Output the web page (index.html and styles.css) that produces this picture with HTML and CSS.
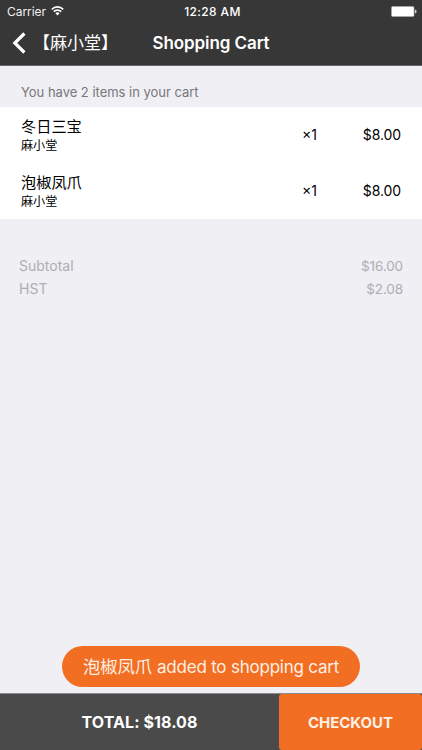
FILE: index.html
```html
<!DOCTYPE html>
<html lang="en">
<head>
<meta charset="utf-8">
<title>Shopping Cart</title>
<link rel="stylesheet" href="styles.css">
</head>
<body>
<div class="screen">
  <header class="top">
    <div class="status">
      <div class="carrier"><span>Carrier</span>
        <svg width="13" height="10" viewBox="0 0 13 10" fill="none" stroke="#fff" stroke-width="1.7"><path d="M.8 3.3a8.1 8.1 0 0 1 11.4 0M2.8 5.6a5.2 5.2 0 0 1 7.4 0"/><path d="M4.4 7.3a3 3 0 0 1 4.2 0l-2.1 2.2z" fill="#fff" stroke="none"/></svg>
      </div>
      <div class="time">12:28 AM</div>
      <div class="power"><svg width="27" height="11" viewBox="0 0 27 11"><rect x="1.5" y=".5" width="22.5" height="10" rx="1.2" fill="#fff" stroke="#aaa" stroke-width=".6"/><path d="M24.8 3.8h.8q.8 0 .8.8v1.8q0 .8-.8.8h-.8z" fill="#ccc"/></svg></div>
    </div>
    <nav class="nav">
      <a class="back"><svg width="14" height="22" viewBox="0 0 14 22" fill="none" stroke="#fff" stroke-width="3.2"><path d="M12.4 1.5 2.8 11l9.6 9.5"/></svg><span>【麻小堂】</span></a>
      <h1>Shopping Cart</h1>
    </nav>
  </header>
  <main class="content">
    <p class="count">You have 2 items in your cart</p>
    <ul class="items">
      <li><div class="name"><b>冬日三宝</b><small>麻小堂</small></div><span class="qty">×1</span><span class="price">$8.00</span></li>
      <li><div class="name"><b>泡椒凤爪</b><small>麻小堂</small></div><span class="qty">×1</span><span class="price">$8.00</span></li>
    </ul>
    <dl class="sums">
      <div><dt>Subtotal</dt><dd>$16.00</dd></div>
      <div><dt>HST</dt><dd>$2.08</dd></div>
    </dl>
  </main>
  <div class="toast"><span class="dish">泡椒凤爪</span><span>added to shopping cart</span></div>
  <footer class="bar"><div class="total">TOTAL: $18.08</div><button class="checkout">CHECKOUT</button></footer>
</div>
</body>
</html>
```
FILE: styles.css
```css
* { box-sizing: border-box; margin: 0; padding: 0; }
body { font-family: Inter, "Noto Sans CJK SC", sans-serif; color: #000; }
.screen { position: relative; width: 422px; height: 750px; background: #efeff4; display: flex; flex-direction: column; overflow: hidden; }
.top { height: 66px; background: #373737; border-bottom: 1px solid #68686b; color: #fff; flex: none; }
.status { height: 22px; display: grid; grid-template-columns: 1fr auto 1fr; align-items: center; padding: 0 5px 0 7px; font-size: 12px; }
.carrier { display: flex; gap: 5px; align-items: center; letter-spacing: -.05px; color: #f0f0f0; }
.time { font-weight: 500; letter-spacing: .35px; padding-left: 1px; }
.power { display: flex; justify-content: flex-end; }
.nav { height: 43px; display: grid; grid-template-columns: 1fr auto 1fr; align-items: center; padding: 0 12px; }
.back { display: flex; align-items: center; font-size: 17px; gap: 7px; white-space: nowrap; padding-bottom: 1px; }
.back span { line-height: 20px; }
.nav h1 { font-size: 17px; font-weight: 600; white-space: nowrap; letter-spacing: -.08px; padding-bottom: 1px; }
.content { flex: 1; }
.count { height: 41px; padding: 11px 21px 0; font-size: 13px; line-height: 30px; color: #77777b; letter-spacing: -.02px; }
.items { list-style: none; background: #fff; height: 112px; }
.items li { height: 56px; padding: 0 21px; display: grid; grid-template-columns: 1fr 30px 69px; align-items: center; font-size: 14px; }
.name b { display: block; font-weight: 400; font-size: 15.2px; line-height: 20px; }
.name small { display: block; font-size: 12.1px; line-height: 17px; }
.qty, .price { padding-bottom: 2px; }
.price { text-align: right; letter-spacing: -.1px; }
.sums { padding: 36px 19px; color: #aeaeb1; font-size: 14px; }
.sums div { display: flex; justify-content: space-between; line-height: 22.5px; }
.sums dd { font-size: 13.5px; letter-spacing: -.1px; }
.toast { position: absolute; left: 62px; top: 646px; width: 298px; height: 41px; border-radius: 21px; background: #f26e22; color: #fff0e4; font-size: 17px; display: flex; align-items: center; justify-content: center; gap: 5px; letter-spacing: -.22px; white-space: nowrap; }
.toast span { line-height: 20px; }
.toast .dish { font-size: 17.3px; letter-spacing: 0; }
.bar { height: 57px; margin-top: -1px; border-top: 1px solid #8b8b8e; display: flex; flex: none; background: #4a4a4a; color: #fff; font-size: 16px; font-weight: 700; }
.total { flex: 1; display: flex; align-items: center; justify-content: center; letter-spacing: .08px; }
.checkout { width: 143px; border: 0; border-radius: 3px; background: #f26e22; color: #fff0e4; font: inherit; font-size: 15px; font-weight: 700; letter-spacing: -.05px; }
```
